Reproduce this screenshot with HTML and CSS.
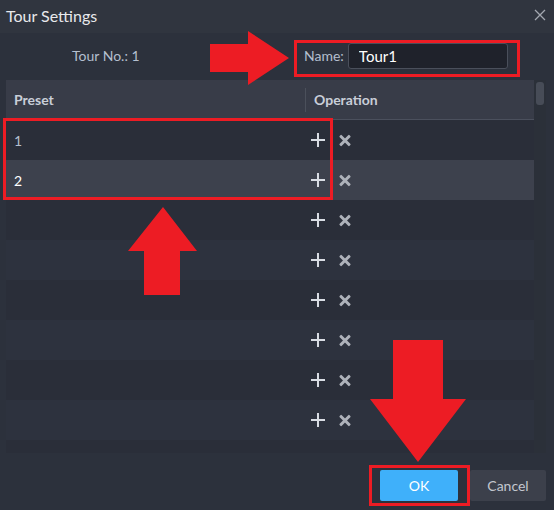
FILE: index.html
```html
<!DOCTYPE html>
<html>
<head>
<meta charset="utf-8">
<link rel="stylesheet" href="styles.css">
</head>
<body>
<div class="dialog">
  <div class="titlebar">
    <span class="title">Tour Settings</span>
    <span class="close">
      <svg width="12" height="12" viewBox="0 0 12 12"><path d="M1 1L11 11M11 1L1 11" stroke="#a3a7b0" stroke-width="1.3" fill="none"/></svg>
    </span>
  </div>
  <div class="toolbar">
    <span class="tourno">Tour No.: 1</span>
    <div class="namegroup">
      <span class="namelabel">Name:</span>
      <input class="nameinput" type="text" value="Tour1">
    </div>
  </div>
  <div class="tablewrap">
    <div class="table">
      <div class="thead">
        <div class="th th-preset">Preset</div>
        <div class="th th-op">Operation</div>
      </div>
      <div class="tbody">
        <div class="row odd"><div class="cell preset">1</div><div class="cell op"><span class="plus"></span><span class="del"></span></div></div>
        <div class="row sel"><div class="cell preset white">2</div><div class="cell op"><span class="plus"></span><span class="del"></span></div></div>
        <div class="row odd"><div class="cell preset"></div><div class="cell op"><span class="plus"></span><span class="del"></span></div></div>
        <div class="row"><div class="cell preset"></div><div class="cell op"><span class="plus"></span><span class="del"></span></div></div>
        <div class="row odd"><div class="cell preset"></div><div class="cell op"><span class="plus"></span><span class="del"></span></div></div>
        <div class="row"><div class="cell preset"></div><div class="cell op"><span class="plus"></span><span class="del"></span></div></div>
        <div class="row odd"><div class="cell preset"></div><div class="cell op"><span class="plus"></span><span class="del"></span></div></div>
        <div class="row"><div class="cell preset"></div><div class="cell op"><span class="plus"></span><span class="del"></span></div></div>
        <div class="row odd"><div class="cell preset"></div><div class="cell op"><span class="plus"></span><span class="del"></span></div></div>
      </div>
    </div>
    <div class="scrollbar"><div class="thumb"></div></div>
  </div>
  <div class="footer">
    <button class="btn ok">OK</button>
    <button class="btn cancel">Cancel</button>
  </div>
  <svg class="overlay" width="554" height="510" viewBox="0 0 554 510">
    <polygon points="210,44 248,44 248,31 289,58 248,85 248,72 210,72" fill="#ed1c24"/>
    <polygon points="163,207 197,251 180,251 180,295 144,295 144,251 128,251" fill="#ed1c24"/>
    <polygon points="393,340 443,340 443,399 466,399 418,462 370,399 393,399" fill="#ed1c24"/>
    <rect x="295.5" y="41.5" width="223" height="34" fill="none" stroke="#ed1c24" stroke-width="3"/>
    <rect x="4.5" y="119.5" width="327" height="79" fill="none" stroke="#ed1c24" stroke-width="3"/>
    <rect x="370.5" y="466.5" width="98" height="38" fill="none" stroke="#ed1c24" stroke-width="3"/>
  </svg>
</div>
</body>
</html>
```
FILE: styles.css
```css
* { box-sizing: border-box; }
html, body { margin: 0; padding: 0; background: #2c313c; }
body { font-family: Lato, "Open Sans", sans-serif; }

.dialog {
  position: relative;
  width: 554px;
  height: 510px;
  background: #2c313c;
  overflow: hidden;
  display: flex;
  flex-direction: column;
}

.titlebar {
  height: 33px;
  background: #30353f;
  display: flex;
  align-items: center;
  justify-content: space-between;
  padding: 0 8px 2px 6px;
}
.title { color: #e8e9ec; font-size: 16px; }
.close { display: flex; width: 12px; height: 12px; margin-top: -2px; }

.toolbar {
  height: 47px;
  display: flex;
  align-items: center;
  padding-left: 72px;
  padding-bottom: 2px;
}
.tourno { color: #b4bfcf; font-size: 14px; width: 232px; }
.namegroup { display: flex; align-items: center; }
.namelabel { color: #b4bfcf; font-size: 14px; margin-right: 4px; }
.nameinput {
  width: 160px;
  height: 26px;
  background: #1f222b;
  border: 1px solid #4a4f5b;
  border-radius: 3px;
  color: #ffffff;
  font-family: Lato, sans-serif;
  font-size: 15px;
  padding: 0 0 0 10px;
  outline: none;
}

.tablewrap {
  margin-left: 6px;
  width: 540px;
  height: 373px;
  display: flex;
  overflow: hidden;
}
.table { width: 528px; display: flex; flex-direction: column; }
.thead {
  height: 40px;
  flex: none;
  background: #383c48;
  border-bottom: 1px solid #4b505d;
  display: flex;
  align-items: center;
}
.th { color: #c9ced8; font-size: 14px; font-weight: 700; }
.th-preset { width: 299px; padding-left: 8px; }
.th-op { border-left: 1px solid #4b505b; height: 24px; display: flex; align-items: center; padding-left: 8px; }

.tbody { display: flex; flex-direction: column; }
.row { height: 40px; flex: none; display: flex; align-items: center; background: #2d323e; }
.row.odd { background: #2a2e39; }
.row.sel { background: #3d414d; }
.cell.preset { width: 299px; padding-left: 8px; color: #b4bfcf; font-size: 14px; }
.cell.preset.white { color: #ffffff; }
.cell.op { display: flex; align-items: center; padding-left: 6px; }

.plus { position: relative; width: 14px; height: 14px; display: inline-block; }
.plus::before, .plus::after { content: ""; position: absolute; background: #d9dde4; }
.plus::before { left: 6px; top: 0; width: 2px; height: 14px; }
.plus::after { top: 6px; left: 0; width: 14px; height: 2px; }

.del { position: relative; width: 12px; height: 12px; display: inline-block; margin-left: 14px; }
.del::before, .del::after {
  content: ""; position: absolute; left: -1px; top: 4.5px; width: 14px; height: 3px;
  background: #aeb2ba; border-radius: 1px;
}
.del::before { transform: rotate(45deg); }
.del::after { transform: rotate(-45deg); }

.scrollbar { width: 12px; background: #2b3039; padding: 2px 2px 0 2px; }
.thumb { width: 8px; height: 23px; background: #474c57; border-radius: 3px; }

.footer {
  flex: 1;
  display: flex;
  justify-content: flex-end;
  align-items: flex-start;
  padding: 17px 8px 0 0;
  gap: 12px;
}
.btn {
  height: 31px;
  border: none;
  border-radius: 2px;
  font-family: Lato, sans-serif;
  font-size: 14px;
  padding: 0;
}
.btn.ok { width: 78px; background: #3fb0fa; color: #ffffff; }
.btn.cancel { width: 76px; background: #3c404b; color: #c3c7cf; }

.overlay { position: absolute; left: 0; top: 0; pointer-events: none; }
```
